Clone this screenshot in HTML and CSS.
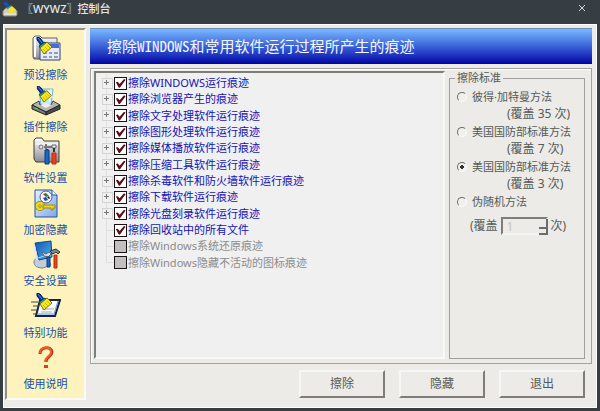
FILE: index.html
```html
<!DOCTYPE html>
<html lang="zh-CN">
<head>
<meta charset="UTF-8">
<meta name="viewport" content="width=device-width, initial-scale=1.0">
<title>〖WYWZ〗控制台</title>
<link rel="stylesheet" href="styles.css">
</head>
<body>
<!-- shared icon parts -->
<svg class="defs" width="0" height="0" aria-hidden="true">
    <defs>
        <symbol id="broom" viewBox="0 0 17 18">
            <path d="M2 0l3 1 4 5-3 2-4-5z" fill="#0b2f9c" stroke="#0a1a55"/>
            <path d="M3 1l4 5" stroke="#4d8be8"/>
            <path d="M4 9l6-4 2 2-6 5z" fill="#20a08c" stroke="#124a48"/>
            <path d="M5 11l7-6 5 5-8 7z" fill="#f6e81c" stroke="#7a7410"/>
            <path d="M8 12l3 3M10 10l3 3M12 8l3 3" stroke="#c8b800"/>
        </symbol>
        <linearGradient id="steel" x1="0" y1="0" x2="0" y2="1">
            <stop offset="0" stop-color="#ffffff"/>
            <stop offset="1" stop-color="#8a8a96"/>
        </linearGradient>
        <linearGradient id="sky" x1="0" y1="0" x2="1" y2="1">
            <stop offset="0" stop-color="#e4f0ff"/>
            <stop offset="1" stop-color="#7fa8e8"/>
        </linearGradient>
        <linearGradient id="screen" x1="0" y1="0" x2="1" y2="1">
            <stop offset="0" stop-color="#1454b0"/>
            <stop offset="1" stop-color="#4cb4f4"/>
        </linearGradient>
    </defs>
</svg>

<div class="window">
    <header class="titlebar">
        <svg class="title-icon" viewBox="0 0 16 16" aria-hidden="true">
            <path d="M1 10l3-3h8l3 3v4l-1 1H2l-1-1z" fill="#d0cdb8" stroke="#8a897a"/>
            <path d="M2 13h12" stroke="#f5f4ea"/>
            <path d="M2 1l2 0 4 4-2 2-4-4z" fill="#1450d0"/>
            <path d="M5 7l4-3 1 2-4 3z" fill="#20a08c"/>
            <path d="M6 8l4-3 4 4-6 4z" fill="#f6e81c"/>
        </svg>
        <h1>〖WYWZ〗控制台</h1>
        <button class="close" type="button" aria-label="关闭">
            <svg viewBox="0 0 8 8"><path d="M1 1l6 6M7 1l-6 6" stroke="#d4d8da" fill="none"/></svg>
        </button>
    </header>

    <div class="client">
        <nav class="sidebar">
            <a href="#preset">
                <svg viewBox="0 0 30 30">
                    <path d="M2 4l2-2h5l2 2h15v21H3l-1-2z" fill="url(#steel)" stroke="#5c5c68"/>
                    <path d="M4 5v18" stroke="#fff" stroke-width="2"/>
                    <path d="M9 9h20v17H9z" fill="#e6ebf6" stroke="#30406e"/>
                    <path d="M10 10h18v4H10z" fill="#3f6fd4"/>
                    <path d="M12 18h4v2h-4zM18 18h3v2h-3zM23 18h4v2h-4zM12 22h4v2h-4zM18 22h3v2h-3zM23 22h4v2h-4z" fill="#8c9ccc"/>
                    <use href="#broom" x="4" y="3" width="17" height="18"/>
                </svg>
                <span>预设擦除</span>
            </a>
            <a href="#plugin">
                <svg viewBox="0 0 30 30">
                    <path d="M8 3l14 0-2 17H10z" fill="#c8e8fa" stroke="#6fb0dc"/>
                    <path d="M17 4l3 4-2 8M20 3l1 9" stroke="#fff" fill="none"/>
                    <path d="M1 19l7-4 1 4h11l2-4 7 4-14 7z" fill="#b4b4b4" stroke="#3c3c3c"/>
                    <path d="M1 19l14 7v3L1 23z" fill="#7b7b7b" stroke="#222"/>
                    <path d="M29 19l-14 7v3l14-6z" fill="#4a4a4a" stroke="#222"/>
                    <path d="M9 19l6 3 6-3-6-2z" fill="#eee"/>
                    <path d="M4 22l3 1" stroke="#53e04f"/>
                    <use href="#broom" x="4" y="0" width="17" height="17"/>
                </svg>
                <span>插件擦除</span>
            </a>
            <a href="#settings">
                <svg viewBox="0 0 30 30">
                    <path d="M3 3l2-2h6l2 3h15v21H5l-2-3z" fill="url(#steel)" stroke="#3c3c3c"/>
                    <path d="M5 7h22" stroke="#fff"/>
                    <circle cx="10" cy="10" r="2" fill="#ddd" stroke="#777"/>
                    <path d="M13 10h9M15 7v5" stroke="#777" stroke-width="2"/>
                    <path d="M21 8h4v3h-4z" fill="#eee" stroke="#666"/>
                    <path d="M16 12v3M23 11v4" stroke="#333" stroke-width="2"/>
                    <path d="M14 13h4v14h-4z" fill="#1767c8" stroke="#0b3c84"/>
                    <path d="M21 16h4v11h-4z" fill="#e8401c" stroke="#b8300c"/>
                </svg>
                <span>软件设置</span>
            </a>
            <a href="#encrypt">
                <svg viewBox="0 0 30 30">
                    <path d="M4 1h17l5 5v22H4z" fill="url(#sky)" stroke="#2452a8"/>
                    <path d="M21 1v5h5" fill="#fff" stroke="#2452a8"/>
                    <circle cx="15" cy="8" r="6" fill="#f2f5fa" stroke="#56657e"/>
                    <path d="M15 4l3 3-3 1z" fill="#15903a"/>
                    <path d="M12 5l3-1v4z" fill="#c22b2b"/>
                    <path d="M12 9l3-1 2 3-3 1z" fill="#2444c0"/>
                    <path d="M18 7l1 3-3-1z" fill="#181818"/>
                    <circle cx="9" cy="17" r="3" fill="none" stroke="#6b5a00" stroke-width="4"/>
                    <circle cx="9" cy="17" r="3" fill="none" stroke="#ecd61c" stroke-width="3"/>
                    <path d="M12 16h12v3h-2v2h-2v-2h-8z" fill="#ecd61c" stroke="#a08c00"/>
                </svg>
                <span>加密隐藏</span>
            </a>
            <a href="#security">
                <svg viewBox="0 0 30 30">
                    <path d="M3 22c0-5 7-5 14-3l3 6-8 3c-6 0-9-2-9-6z" fill="#c6ccd6" stroke="#7a8294"/>
                    <path d="M4 3l16-2 1 16-13 3z" fill="url(#screen)" stroke="#0c4a98"/>
                    <path d="M7 18l12-4" stroke="#9bdcff"/>
                    <path d="M3 5l3 15" stroke="#dfe8f4" stroke-width="2"/>
                    <path d="M11 12l4 2 3-2 2 2-3 3-4-1z" fill="#ddd" stroke="#666"/>
                    <path d="M19 11l6-2 4 3-2 2-2-2-3 2z" fill="#888" stroke="#333"/>
                    <path d="M16 17h3v10h-3z" fill="#1767c8" stroke="#0b3c84"/>
                    <path d="M23 15h3v13h-3z" fill="#e8401c" stroke="#b8300c"/>
                </svg>
                <span>安全设置</span>
            </a>
            <a href="#special">
                <svg viewBox="0 0 30 30">
                    <path d="M9 8h20l-5 16H5z" fill="#fff" stroke="#14233f" stroke-width="2"/>
                    <path d="M27 9l-4 13H7" stroke="#5a92e0" fill="none"/>
                    <path d="M0 10h7M2 14h6M0 18h6M2 22h3" stroke="#444"/>
                    <path d="M10 20h11M11 17h12" stroke="#9ab"/>
                    <use href="#broom" x="4" y="1" width="17" height="18"/>
                </svg>
                <span>特别功能</span>
            </a>
            <a href="#help">
                <svg viewBox="0 0 30 30">
                    <path d="M9 11c0-8 12-8 12-2 0 5-6 4-6 10" fill="none" stroke="#b03c14" stroke-width="3"/>
                    <path d="M9 10c0-7 11-7 11-1 0 5-6 4-6 10" fill="none" stroke="#f0602a" stroke-width="2"/>
                    <path d="M13 22h4v3h-4z" fill="#d0441c"/>
                </svg>
                <span>使用说明</span>
            </a>
        </nav>

        <main class="main">
            <h2 class="banner">擦除WINDOWS和常用软件运行过程所产生的痕迹</h2>

            <div class="panel">
                <div class="tree-box">
                    <ul class="tree">
                        <li class="branch"><label><input type="checkbox" checked>擦除WINDOWS运行痕迹</label></li>
                        <li class="branch"><label><input type="checkbox" checked>擦除浏览器产生的痕迹</label></li>
                        <li class="branch"><label><input type="checkbox" checked>擦除文字处理软件运行痕迹</label></li>
                        <li class="branch"><label><input type="checkbox" checked>擦除图形处理软件运行痕迹</label></li>
                        <li class="branch"><label><input type="checkbox" checked>擦除媒体播放软件运行痕迹</label></li>
                        <li class="branch"><label><input type="checkbox" checked>擦除压缩工具软件运行痕迹</label></li>
                        <li class="branch"><label><input type="checkbox" checked>擦除杀毒软件和防火墙软件运行痕迹</label></li>
                        <li class="branch"><label><input type="checkbox" checked>擦除下载软件运行痕迹</label></li>
                        <li class="branch"><label><input type="checkbox" checked>擦除光盘刻录软件运行痕迹</label></li>
                        <li><label><input type="checkbox" checked>擦除回收站中的所有文件</label></li>
                        <li><label><input type="checkbox" disabled>擦除Windows系统还原痕迹</label></li>
                        <li><label><input type="checkbox" disabled>擦除Windows隐藏不活动的图标痕迹</label></li>
                    </ul>
                </div>

                <fieldset class="standard">
                    <legend>擦除标准</legend>
                    <label class="option"><input type="radio" name="standard">彼得·加特曼方法</label>
                    <p class="passes">(覆盖 35 次)</p>
                    <label class="option"><input type="radio" name="standard">美国国防部标准方法</label>
                    <p class="passes">(覆盖 7 次)</p>
                    <label class="option"><input type="radio" name="standard" checked>美国国防部标准方法</label>
                    <p class="passes">(覆盖 3 次)</p>
                    <label class="option"><input type="radio" name="standard">伪随机方法</label>
                    <label class="custom">(覆盖 <span class="spin"><input type="number" value="1" disabled></span> 次)</label>
                </fieldset>
            </div>

            <div class="actions">
                <button type="button">擦除</button>
                <button type="button">隐藏</button>
                <button type="button">退出</button>
            </div>
        </main>
    </div>
</div>
</body>
</html>
```
FILE: styles.css
```css
* {
    box-sizing: border-box;
}
body {
    margin: 0;
    font-family: "Noto Sans", "Noto Sans CJK SC", sans-serif;
    font-size: 11px;
    line-height: 14px;
    color: #555a58;
}
h1, h2, p, ul {
    margin: 0;
    padding: 0;
}
.defs {
    position: absolute;
}
.window {
    display: flex;
    flex-direction: column;
    min-height: 100vh;
    background-color: #363e44;
}

/* title bar */
.titlebar {
    display: flex;
    height: 24px;
    padding: 1px 11px 0 2px;
}
.title-icon {
    width: 16px;
    height: 16px;
}
h1 {
    flex: 1;
    padding-left: 4px;
    font-size: 11px;
    font-weight: 500;
    line-height: 15px;
    color: #e6e8e8;
}
.close {
    width: 14px;
    height: 13px;
    padding: 0;
    border: none;
    background: none;
    line-height: 0;
}
.close svg {
    width: 8px;
    height: 8px;
}

.client {
    flex: 1;
    display: flex;
    gap: 4px;
    margin: 0 3px 3px;
    padding: 4px 5px 8px 2px;
    background-color: #ecebe7;
    box-shadow: inset 1px 1px #fff, inset -1px -1px #fff;
}

/* left navigation */
.sidebar {
    display: flex;
    flex-direction: column;
    width: 81px;
    padding: 4px 0 3px;
    border: 2px solid;
    border-color: #8f8f88 #fafaf8 #fafaf8 #8f8f88;
    background-color: #fff3bd;
}
.sidebar a {
    flex: 1;
    display: flex;
    flex-direction: column;
    align-items: center;
    gap: 4px;
    color: #1750a8;
    text-decoration: none;
}
.sidebar svg {
    width: 30px;
    height: 30px;
}

.main {
    flex: 1;
    display: flex;
    flex-direction: column;
}
.banner {
    height: 36px;
    margin-bottom: 4px;
    padding-left: 17px;
    border-top: 1px solid #6b8fb8;
    background: linear-gradient(#78b8ff, #3a62d8 50%, #0204a4);
    font-family: "Noto Sans CJK SC", sans-serif;
    font-feature-settings: "hwid";
    font-size: 15px;
    font-weight: 400;
    line-height: 33px;
    color: #f4f8ff;
}
.panel {
    flex: 1;
    display: flex;
    gap: 4px;
    padding: 2px 6px 4px 3px;
    border: 1px solid #a3a39e;
    box-shadow: inset 1px 1px #fff;
}

/* tree of things to erase */
.tree-box {
    flex: 1;
    padding: 2px 0 0 6px;
    border: 2px solid;
    border-color: #7d7d7b #f8f8f6 #f8f8f6 #7d7d7b;
    background-color: #f0f0f0;
}
.tree {
    display: grid;
    grid-auto-rows: 1fr;
    height: 196px;
    list-style: none;
    color: #1414b4;
}
.tree li {
    display: grid;
    grid-template-columns: 12px 1fr;
    align-items: center;
    background: linear-gradient(#e0e0e0, #e0e0e0) 4px 0 / 1px 100% no-repeat;
}
.tree li:last-child {
    background-size: 1px 50%;
}
.tree li::before {
    content: "";
    height: 1px;
    margin-left: 4px;
    background-color: #e0e0e0;
}
.tree .branch::before {
    width: 9px;
    height: 9px;
    margin-left: 0;
    border: 1px solid #d4d4d4;
    background:
        linear-gradient(#777, #777) 1px 3px / 5px 1px no-repeat,
        linear-gradient(#777, #777) 3px 1px / 1px 5px no-repeat,
        #f0f0f0;
}
.tree label {
    display: flex;
    align-items: center;
    gap: 1px;
}
.tree input {
    appearance: none;
    width: 13px;
    height: 13px;
    margin: 0;
    border: 1px solid #1a1214;
    background-color: #fff;
}
.tree input:checked::before {
    content: "";
    display: block;
    height: 11px;
    background-color: #5c0c14;
    clip-path: polygon(8% 42%, 25% 38%, 42% 58%, 82% 12%, 96% 20%, 44% 92%, 34% 90%);
}
.tree input:disabled {
    background-color: #c0c0c0;
}
.tree label:has(:disabled) {
    color: #8c8c8c;
}

/* erase standard */
.standard {
    width: 136px;
    margin: 0;
    padding: 4px 0 0 7px;
    border: 1px solid #a0a09c;
}
.standard legend {
    padding: 0 2px;
    margin-left: -2px;
}
.option {
    display: flex;
    align-items: center;
    gap: 5px;
    height: 16px;
}
.option input {
    appearance: none;
    width: 10px;
    height: 10px;
    margin: 0;
    border: 1px solid;
    border-color: #6c6c6a #fafaf8 #fafaf8 #6c6c6a;
    border-radius: 50%;
    background-color: #f0f0ec;
}
.option input:checked {
    background-image: radial-gradient(circle, #333 2px, transparent 2px);
}
.passes {
    height: 19px;
    padding: 2px 0 0 50px;
    font-size: 12px;
}
.custom {
    display: flex;
    align-items: center;
    gap: 3px;
    margin-top: 7px;
    padding-left: 13px;
    font-size: 12px;
}
.spin {
    position: relative;
}
.spin input {
    display: block;
    appearance: textfield;
    width: 47px;
    height: 18px;
    padding: 0 4px;
    border: 2px solid;
    border-color: #7d7d7b #f4f4f2 #f4f4f2 #7d7d7b;
    background-color: #ecebe7;
    font: inherit;
    color: #c4c4c0;
}
/* up and down arrows of the spin box */
.spin::before, .spin::after {
    content: "";
    position: absolute;
    right: 0;
    width: 7px;
    height: 8px;
    border: solid #6c6c6a;
    border-width: 0 2px 2px 0;
}
.spin::before {
    top: 2px;
}
.spin::after {
    bottom: 0;
}

.actions {
    display: flex;
    justify-content: flex-end;
    gap: 14px;
    padding: 6px 7px 2px 0;
}
.actions button {
    width: 86px;
    height: 28px;
    padding: 0;
    border: 2px solid;
    border-color: #f6f6f4 #7f7c79 #7f7c79 #f6f6f4;
    background-color: #ecebe7;
    font: inherit;
    font-size: 12px;
    color: #555a58;
}
```
